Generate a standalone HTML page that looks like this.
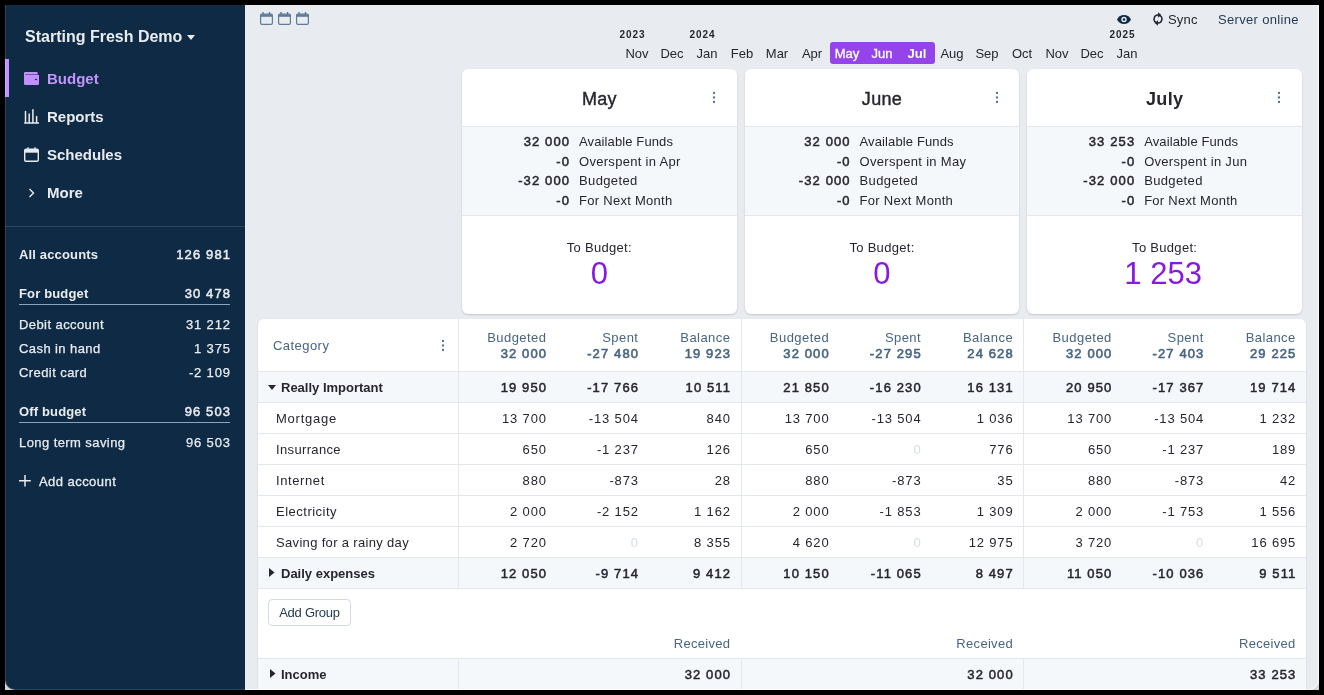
<!DOCTYPE html>
<html><head><meta charset="utf-8"><style>
*{box-sizing:border-box;margin:0;padding:0}
html,body{width:1324px;height:695px;overflow:hidden;background:#000;font-family:"Liberation Sans", sans-serif;color:#272630}
.abs{position:absolute;white-space:nowrap}
#frame{position:absolute;left:5px;top:5px;width:1314px;height:685px;background:#e8ecf0;overflow:hidden;border-radius:0 0 10px 10px}
#side{position:absolute;left:0;top:0;width:240px;height:685px;background:#0f2a44;color:#e8ecf0}
.r{text-align:right}
.c{text-align:center}
.sb{-webkit-text-stroke:0.4px currentColor}
</style></head>
<body><div style="position:absolute;left:0;top:0;width:1324px;height:695px;will-change:transform">
<div class="abs" style="left:5px;top:678px;width:12px;height:12px;background:#d6d6d6"></div><div class="abs" style="left:1307px;top:678px;width:12px;height:12px;background:#d6d6d6"></div><div id="frame"></div><div class="abs" style="left:5px;top:5px;width:240px;height:685px;background:#0f2a44;border-bottom-left-radius:10px"></div>
<div class="abs" style="left:25px;top:28px;font-size:16px;font-weight:bold;color:#e8ecf0;line-height:18px;">Starting Fresh Demo</div>
<div class="abs" style="left:187px;top:35px;line-height:0"><svg width="8" height="5" viewBox="0 0 8 5"><path d="M0 0h8L4 5z" fill="#e8ecf0"/></svg></div>
<div class="abs" style="left:5px;top:59px;width:4px;height:38px;background:#c394fc"></div>
<div class="abs" style="left:47px;top:70px;font-size:15px;font-weight:bold;color:#c394fc;line-height:18px">Budget</div>
<div class="abs" style="left:47px;top:108px;font-size:15px;font-weight:bold;color:#e8ecf0;line-height:18px">Reports</div>
<div class="abs" style="left:47px;top:146px;font-size:15px;font-weight:bold;color:#e8ecf0;line-height:18px">Schedules</div>
<div class="abs" style="left:47px;top:184px;font-size:15px;font-weight:bold;color:#e8ecf0;line-height:18px">More</div>
<div class="abs" style="left:24px;top:72px;line-height:0"><svg width="15" height="13" viewBox="0 0 15 13"><path d="M1.2 0h11.5a1 1 0 0 1 1 1v1.5H1.5v0.6H15v8.7a1.2 1.2 0 0 1-1.2 1.2H1.2A1.2 1.2 0 0 1 0 11.8V1.2A1.2 1.2 0 0 1 1.2 0z" fill="#c190fc"/><ellipse cx="12" cy="7.5" rx="1.1" ry="0.8" fill="#0f2a44"/></svg></div>
<div class="abs" style="left:24px;top:108px;line-height:0"><svg width="15" height="16" viewBox="0 0 15 16" fill="none" stroke="#e8ecf0" stroke-width="1.5" stroke-linecap="round"><path d="M0.8 15h13.6" stroke-width="1.6"/><path d="M1.5 14.5V3.5M5.2 14.5V6M8.9 14.5V1.8M12.6 14.5V8.5"/></svg></div>
<div class="abs" style="left:24px;top:147px;line-height:0"><svg width="15" height="15" viewBox="0 0 15 15" fill="none" stroke="#e8ecf0" stroke-width="1.4"><rect x="0.7" y="2.2" width="13.6" height="12.1" rx="1.4"/><path d="M0.7 4.2h13.6" stroke-width="3"/><path d="M4 0.3v3M11 0.3v3" stroke-width="1.3"/></svg></div>
<div class="abs" style="left:28px;top:188px;line-height:0"><svg width="7" height="10" viewBox="0 0 7 10" fill="none" stroke="#e8ecf0" stroke-width="1.4"><path d="M1.5 1l4 4-4 4"/></svg></div>
<div class="abs" style="left:5px;top:226px;width:240px;height:1px;background:#2c4660"></div>
<div class="abs" style="left:19px;top:246px;font-size:13px;font-weight:bold;color:#e8ecf0;line-height:18px;letter-spacing:0.15px;">All accounts</div>
<div class="abs" style="left:131.12px;top:246px;width:100px;text-align:right;font-size:13px;-webkit-text-stroke:0.5px #e8ecf0;color:#e8ecf0;line-height:18px;letter-spacing:1.12px">126 981</div>
<div class="abs" style="left:19px;top:285px;font-size:13px;font-weight:bold;color:#e8ecf0;line-height:18px;letter-spacing:0.15px;">For budget</div>
<div class="abs" style="left:131.12px;top:285px;width:100px;text-align:right;font-size:13px;-webkit-text-stroke:0.5px #e8ecf0;color:#e8ecf0;line-height:18px;letter-spacing:1.12px">30 478</div>
<div class="abs" style="left:19px;top:304px;width:211px;height:1px;background:#8fa3b8"></div>
<div class="abs" style="left:19px;top:316px;font-size:13px;font-weight:normal;color:#e8ecf0;line-height:18px;letter-spacing:0.42px;-webkit-text-stroke:0.25px #e8ecf0;">Debit account</div>
<div class="abs" style="left:130.85px;top:316px;width:100px;text-align:right;font-size:13px;-webkit-text-stroke:0.25px #e8ecf0;;color:#e8ecf0;line-height:18px;letter-spacing:0.85px">31 212</div>
<div class="abs" style="left:19px;top:340px;font-size:13px;font-weight:normal;color:#e8ecf0;line-height:18px;letter-spacing:0.42px;-webkit-text-stroke:0.25px #e8ecf0;">Cash in hand</div>
<div class="abs" style="left:130.85px;top:340px;width:100px;text-align:right;font-size:13px;-webkit-text-stroke:0.25px #e8ecf0;;color:#e8ecf0;line-height:18px;letter-spacing:0.85px">1 375</div>
<div class="abs" style="left:19px;top:364px;font-size:13px;font-weight:normal;color:#e8ecf0;line-height:18px;letter-spacing:0.42px;-webkit-text-stroke:0.25px #e8ecf0;">Credit card</div>
<div class="abs" style="left:130.85px;top:364px;width:100px;text-align:right;font-size:13px;-webkit-text-stroke:0.25px #e8ecf0;;color:#e8ecf0;line-height:18px;letter-spacing:0.85px">-2 109</div>
<div class="abs" style="left:19px;top:403px;font-size:13px;font-weight:bold;color:#e8ecf0;line-height:18px;letter-spacing:0.15px;">Off budget</div>
<div class="abs" style="left:131.12px;top:403px;width:100px;text-align:right;font-size:13px;-webkit-text-stroke:0.5px #e8ecf0;color:#e8ecf0;line-height:18px;letter-spacing:1.12px">96 503</div>
<div class="abs" style="left:19px;top:422px;width:211px;height:1px;background:#8fa3b8"></div>
<div class="abs" style="left:19px;top:434px;font-size:13px;font-weight:normal;color:#e8ecf0;line-height:18px;letter-spacing:0.42px;-webkit-text-stroke:0.25px #e8ecf0;">Long term saving</div>
<div class="abs" style="left:130.85px;top:434px;width:100px;text-align:right;font-size:13px;-webkit-text-stroke:0.25px #e8ecf0;;color:#e8ecf0;line-height:18px;letter-spacing:0.85px">96 503</div>
<div class="abs" style="left:19px;top:475px;line-height:0"><svg width="12" height="12" viewBox="0 0 12 12" stroke="#e8ecf0" stroke-width="1.5"><path d="M6 0v11.5M0 5.8h11.8"/></svg></div>
<div class="abs" style="left:39px;top:473px;font-size:13px;color:#e8ecf0;line-height:18px;letter-spacing:0.45px;-webkit-text-stroke:0.3px #e8ecf0">Add account</div>
<div class="abs" style="left:260px;top:11px;line-height:0"><svg width="13" height="14" viewBox="0 0 13 14" fill="none" stroke="#5f7b98" stroke-width="1.2"><rect x="0.6" y="3.1" width="11.8" height="10.2" rx="1.3"/><path d="M0.6 4.6h11.8" stroke-width="2.4"/><path d="M3 1v3M9.5 1v3" stroke-width="1.4"/></svg></div>
<div class="abs" style="left:278px;top:11px;line-height:0"><svg width="13" height="14" viewBox="0 0 13 14" fill="none" stroke="#5f7b98" stroke-width="1.2"><rect x="0.6" y="3.1" width="11.8" height="10.2" rx="1.3"/><path d="M0.6 4.6h11.8" stroke-width="2.4"/><path d="M3 1v3M9.5 1v3" stroke-width="1.4"/></svg></div>
<div class="abs" style="left:296px;top:11px;line-height:0"><svg width="13" height="14" viewBox="0 0 13 14" fill="none" stroke="#5f7b98" stroke-width="1.2"><rect x="0.6" y="3.1" width="11.8" height="10.2" rx="1.3"/><path d="M0.6 4.6h11.8" stroke-width="2.4"/><path d="M3 1v3M9.5 1v3" stroke-width="1.4"/></svg></div>
<div class="abs" style="left:830px;top:42px;width:105px;height:22px;background:#9444ea;border-radius:3px"></div>
<div class="abs" style="left:619.5px;top:45px;width:35px;text-align:center;font-size:13px;color:#272630;font-weight:normal;line-height:18px;">Nov</div>
<div class="abs" style="left:654.5px;top:45px;width:35px;text-align:center;font-size:13px;color:#272630;font-weight:normal;line-height:18px;">Dec</div>
<div class="abs" style="left:689.5px;top:45px;width:35px;text-align:center;font-size:13px;color:#272630;font-weight:normal;line-height:18px;">Jan</div>
<div class="abs" style="left:724.5px;top:45px;width:35px;text-align:center;font-size:13px;color:#272630;font-weight:normal;line-height:18px;">Feb</div>
<div class="abs" style="left:759.5px;top:45px;width:35px;text-align:center;font-size:13px;color:#272630;font-weight:normal;line-height:18px;">Mar</div>
<div class="abs" style="left:794.5px;top:45px;width:35px;text-align:center;font-size:13px;color:#272630;font-weight:normal;line-height:18px;">Apr</div>
<div class="abs" style="left:829.5px;top:45px;width:35px;text-align:center;font-size:13px;color:#fff;font-weight:normal;line-height:18px;-webkit-text-stroke:0.3px #fff;">May</div>
<div class="abs" style="left:864.5px;top:45px;width:35px;text-align:center;font-size:13px;color:#fff;font-weight:normal;line-height:18px;-webkit-text-stroke:0.3px #fff;">Jun</div>
<div class="abs" style="left:899.5px;top:45px;width:35px;text-align:center;font-size:13px;color:#fff;font-weight:bold;line-height:18px;">Jul</div>
<div class="abs" style="left:934.5px;top:45px;width:35px;text-align:center;font-size:13px;color:#272630;font-weight:normal;line-height:18px;">Aug</div>
<div class="abs" style="left:969.5px;top:45px;width:35px;text-align:center;font-size:13px;color:#272630;font-weight:normal;line-height:18px;">Sep</div>
<div class="abs" style="left:1004.5px;top:45px;width:35px;text-align:center;font-size:13px;color:#272630;font-weight:normal;line-height:18px;">Oct</div>
<div class="abs" style="left:1039.5px;top:45px;width:35px;text-align:center;font-size:13px;color:#272630;font-weight:normal;line-height:18px;">Nov</div>
<div class="abs" style="left:1074.5px;top:45px;width:35px;text-align:center;font-size:13px;color:#272630;font-weight:normal;line-height:18px;">Dec</div>
<div class="abs" style="left:1109.5px;top:45px;width:35px;text-align:center;font-size:13px;color:#272630;font-weight:normal;line-height:18px;">Jan</div>
<div class="abs" style="left:619.5px;top:29px;font-size:10px;font-weight:bold;line-height:11px;color:#272630;letter-spacing:0.9px">2023</div>
<div class="abs" style="left:689.5px;top:29px;font-size:10px;font-weight:bold;line-height:11px;color:#272630;letter-spacing:0.9px">2024</div>
<div class="abs" style="left:1109.5px;top:29px;font-size:10px;font-weight:bold;line-height:11px;color:#272630;letter-spacing:0.9px">2025</div>
<div class="abs" style="left:1116.5px;top:15px;line-height:0"><svg width="14" height="9" viewBox="0 0 14 9"><path d="M7 0C3.8 0 1.1 1.9 0 4.5 1.1 7.1 3.8 9 7 9s5.9-1.9 7-4.5C12.9 1.9 10.2 0 7 0z" fill="#102a43"/><circle cx="7" cy="4.5" r="2.7" fill="#e8ecf0"/><circle cx="7" cy="4.5" r="1.3" fill="#102a43"/></svg></div>
<div class="abs" style="left:1153px;top:12px;line-height:0"><svg width="10" height="14" viewBox="0 0 10 14"><g fill="none" stroke="#272630" stroke-width="1.5"><path d="M5.6 3.1A4 4 0 0 0 3.2 10.6"/><path d="M4.4 10.9A4 4 0 0 0 6.8 3.4"/></g><path d="M5 0.3L8.3 3 5 5.7z" fill="#272630"/><path d="M5 8.3L1.7 11 5 13.7z" fill="#272630"/></svg></div>
<div class="abs" style="left:1168px;top:11px;font-size:13px;line-height:18px;color:#272630;letter-spacing:0.2px">Sync</div>
<div class="abs" style="left:1218px;top:11px;font-size:13px;line-height:18px;color:#243b53;letter-spacing:0.33px">Server online</div>
<div class="abs" style="left:462px;top:69px;width:274.67px;height:245px;background:#fff;border-radius:6px;box-shadow:0 1px 2px rgba(0,0,0,0.16);overflow:hidden"><div class="abs" style="left:0;top:57px;width:274.67px;height:90px;background:#f5f8fb;border-top:1px solid #e3e8ee;border-bottom:1px solid #e3e8ee"></div></div>
<div class="abs" style="left:462px;top:88px;width:274.67px;text-align:center;font-size:18px;font-weight:normal;line-height:22px;color:#272630;letter-spacing:0.3px;-webkit-text-stroke:0.4px">May</div>
<div class="abs" style="left:712px;top:91px;line-height:0"><svg width="4" height="13" viewBox="0 0 4 13" fill="#4f6f91"><circle cx="2" cy="2" r="1.15"/><circle cx="2" cy="6.5" r="1.15"/><circle cx="2" cy="11" r="1.15"/></svg></div>
<div class="abs" style="left:469.12px;top:133.0px;width:101px;text-align:right;font-size:13px;-webkit-text-stroke:0.5px #272630;line-height:18px;color:#272630;letter-spacing:1.12px">32 000</div>
<div class="abs" style="left:579px;top:133.0px;font-size:13px;line-height:18px;color:#272630;letter-spacing:0.12px">Available Funds</div>
<div class="abs" style="left:469.12px;top:152.5px;width:101px;text-align:right;font-size:13px;-webkit-text-stroke:0.5px #272630;line-height:18px;color:#272630;letter-spacing:1.12px">-0</div>
<div class="abs" style="left:579px;top:152.5px;font-size:13px;line-height:18px;color:#272630;letter-spacing:0.3px">Overspent in Apr</div>
<div class="abs" style="left:469.12px;top:172.0px;width:101px;text-align:right;font-size:13px;-webkit-text-stroke:0.5px #272630;line-height:18px;color:#272630;letter-spacing:1.12px">-32 000</div>
<div class="abs" style="left:579px;top:172.0px;font-size:13px;line-height:18px;color:#272630;letter-spacing:0.37px">Budgeted</div>
<div class="abs" style="left:469.12px;top:191.5px;width:101px;text-align:right;font-size:13px;-webkit-text-stroke:0.5px #272630;line-height:18px;color:#272630;letter-spacing:1.12px">-0</div>
<div class="abs" style="left:579px;top:191.5px;font-size:13px;line-height:18px;color:#272630;letter-spacing:0.28px">For Next Month</div>
<div class="abs" style="left:462px;top:239px;width:274.67px;text-align:center;font-size:13px;line-height:18px;color:#272630;letter-spacing:0.3px">To Budget:</div>
<div class="abs" style="left:462px;top:257px;width:274.67px;text-align:center;font-size:31px;line-height:34px;color:#8719e0">0</div>
<div class="abs" style="left:744.67px;top:69px;width:274.67px;height:245px;background:#fff;border-radius:6px;box-shadow:0 1px 2px rgba(0,0,0,0.16);overflow:hidden"><div class="abs" style="left:0;top:57px;width:274.67px;height:90px;background:#f5f8fb;border-top:1px solid #e3e8ee;border-bottom:1px solid #e3e8ee"></div></div>
<div class="abs" style="left:744.67px;top:88px;width:274.67px;text-align:center;font-size:18px;font-weight:normal;line-height:22px;color:#272630;letter-spacing:0.3px;-webkit-text-stroke:0.4px">June</div>
<div class="abs" style="left:994.67px;top:91px;line-height:0"><svg width="4" height="13" viewBox="0 0 4 13" fill="#4f6f91"><circle cx="2" cy="2" r="1.15"/><circle cx="2" cy="6.5" r="1.15"/><circle cx="2" cy="11" r="1.15"/></svg></div>
<div class="abs" style="left:749.6899999999999px;top:133.0px;width:101px;text-align:right;font-size:13px;-webkit-text-stroke:0.5px #272630;line-height:18px;color:#272630;letter-spacing:1.12px">32 000</div>
<div class="abs" style="left:859.5699999999999px;top:133.0px;font-size:13px;line-height:18px;color:#272630;letter-spacing:0.12px">Available Funds</div>
<div class="abs" style="left:749.6899999999999px;top:152.5px;width:101px;text-align:right;font-size:13px;-webkit-text-stroke:0.5px #272630;line-height:18px;color:#272630;letter-spacing:1.12px">-0</div>
<div class="abs" style="left:859.5699999999999px;top:152.5px;font-size:13px;line-height:18px;color:#272630;letter-spacing:0.3px">Overspent in May</div>
<div class="abs" style="left:749.6899999999999px;top:172.0px;width:101px;text-align:right;font-size:13px;-webkit-text-stroke:0.5px #272630;line-height:18px;color:#272630;letter-spacing:1.12px">-32 000</div>
<div class="abs" style="left:859.5699999999999px;top:172.0px;font-size:13px;line-height:18px;color:#272630;letter-spacing:0.37px">Budgeted</div>
<div class="abs" style="left:749.6899999999999px;top:191.5px;width:101px;text-align:right;font-size:13px;-webkit-text-stroke:0.5px #272630;line-height:18px;color:#272630;letter-spacing:1.12px">-0</div>
<div class="abs" style="left:859.5699999999999px;top:191.5px;font-size:13px;line-height:18px;color:#272630;letter-spacing:0.28px">For Next Month</div>
<div class="abs" style="left:744.67px;top:239px;width:274.67px;text-align:center;font-size:13px;line-height:18px;color:#272630;letter-spacing:0.3px">To Budget:</div>
<div class="abs" style="left:744.67px;top:257px;width:274.67px;text-align:center;font-size:31px;line-height:34px;color:#8719e0">0</div>
<div class="abs" style="left:1027.33px;top:69px;width:274.67px;height:245px;background:#fff;border-radius:6px;box-shadow:0 1px 2px rgba(0,0,0,0.16);overflow:hidden"><div class="abs" style="left:0;top:57px;width:274.67px;height:90px;background:#f5f8fb;border-top:1px solid #e3e8ee;border-bottom:1px solid #e3e8ee"></div></div>
<div class="abs" style="left:1027.33px;top:88px;width:274.67px;text-align:center;font-size:18px;font-weight:bold;line-height:22px;color:#272630;letter-spacing:0.3px;-webkit-text-stroke:0">July</div>
<div class="abs" style="left:1277.33px;top:91px;line-height:0"><svg width="4" height="13" viewBox="0 0 4 13" fill="#4f6f91"><circle cx="2" cy="2" r="1.15"/><circle cx="2" cy="6.5" r="1.15"/><circle cx="2" cy="11" r="1.15"/></svg></div>
<div class="abs" style="left:1034.2499999999998px;top:133.0px;width:101px;text-align:right;font-size:13px;-webkit-text-stroke:0.5px #272630;line-height:18px;color:#272630;letter-spacing:1.12px">33 253</div>
<div class="abs" style="left:1144.1299999999999px;top:133.0px;font-size:13px;line-height:18px;color:#272630;letter-spacing:0.12px">Available Funds</div>
<div class="abs" style="left:1034.2499999999998px;top:152.5px;width:101px;text-align:right;font-size:13px;-webkit-text-stroke:0.5px #272630;line-height:18px;color:#272630;letter-spacing:1.12px">-0</div>
<div class="abs" style="left:1144.1299999999999px;top:152.5px;font-size:13px;line-height:18px;color:#272630;letter-spacing:0.3px">Overspent in Jun</div>
<div class="abs" style="left:1034.2499999999998px;top:172.0px;width:101px;text-align:right;font-size:13px;-webkit-text-stroke:0.5px #272630;line-height:18px;color:#272630;letter-spacing:1.12px">-32 000</div>
<div class="abs" style="left:1144.1299999999999px;top:172.0px;font-size:13px;line-height:18px;color:#272630;letter-spacing:0.37px">Budgeted</div>
<div class="abs" style="left:1034.2499999999998px;top:191.5px;width:101px;text-align:right;font-size:13px;-webkit-text-stroke:0.5px #272630;line-height:18px;color:#272630;letter-spacing:1.12px">-0</div>
<div class="abs" style="left:1144.1299999999999px;top:191.5px;font-size:13px;line-height:18px;color:#272630;letter-spacing:0.28px">For Next Month</div>
<div class="abs" style="left:1027.33px;top:239px;width:274.67px;text-align:center;font-size:13px;line-height:18px;color:#272630;letter-spacing:0.3px">To Budget:</div>
<div class="abs" style="left:1025.83px;top:257px;width:274.67px;text-align:center;font-size:31px;line-height:34px;color:#8719e0">1 253</div>
<div class="abs" style="left:258px;top:319px;width:1048px;height:380px;background:#fff;border-radius:6px 6px 0 0;box-shadow:0 1px 2px rgba(0,0,0,0.14)"></div>
<div class="abs" style="left:458px;top:319px;width:1px;height:270px;background:#e3e8ee"></div>
<div class="abs" style="left:458px;top:658px;width:1px;height:40px;background:#e3e8ee"></div>
<div class="abs" style="left:740.67px;top:319px;width:1px;height:270px;background:#e3e8ee"></div>
<div class="abs" style="left:740.67px;top:658px;width:1px;height:40px;background:#e3e8ee"></div>
<div class="abs" style="left:1023.33px;top:319px;width:1px;height:270px;background:#e3e8ee"></div>
<div class="abs" style="left:1023.33px;top:658px;width:1px;height:40px;background:#e3e8ee"></div>
<div class="abs" style="left:273px;top:337px;font-size:13px;line-height:18px;color:#486581;letter-spacing:0.45px">Category</div>
<div class="abs" style="left:440.7px;top:339px;line-height:0"><svg width="4" height="13" viewBox="0 0 4 13" fill="#4f6f91"><circle cx="2" cy="2" r="1.15"/><circle cx="2" cy="6.5" r="1.15"/><circle cx="2" cy="11" r="1.15"/></svg></div>
<div class="abs" style="left:446.45px;top:329px;width:100px;text-align:right;font-size:13px;line-height:18px;color:#486581;letter-spacing:0.45px">Budgeted</div>
<div class="abs" style="left:447.12px;top:345px;width:100px;text-align:right;font-size:13px;-webkit-text-stroke:0.6px #486581;line-height:18px;color:#486581;letter-spacing:1.12px">32 000</div>
<div class="abs" style="left:538.45px;top:329px;width:100px;text-align:right;font-size:13px;line-height:18px;color:#486581;letter-spacing:0.45px">Spent</div>
<div class="abs" style="left:539.12px;top:345px;width:100px;text-align:right;font-size:13px;-webkit-text-stroke:0.6px #486581;line-height:18px;color:#486581;letter-spacing:1.12px">-27 480</div>
<div class="abs" style="left:630.45px;top:329px;width:100px;text-align:right;font-size:13px;line-height:18px;color:#486581;letter-spacing:0.45px">Balance</div>
<div class="abs" style="left:631.12px;top:345px;width:100px;text-align:right;font-size:13px;-webkit-text-stroke:0.6px #486581;line-height:18px;color:#486581;letter-spacing:1.12px">19 923</div>
<div class="abs" style="left:729.12px;top:329px;width:100px;text-align:right;font-size:13px;line-height:18px;color:#486581;letter-spacing:0.45px">Budgeted</div>
<div class="abs" style="left:729.79px;top:345px;width:100px;text-align:right;font-size:13px;-webkit-text-stroke:0.6px #486581;line-height:18px;color:#486581;letter-spacing:1.12px">32 000</div>
<div class="abs" style="left:821.12px;top:329px;width:100px;text-align:right;font-size:13px;line-height:18px;color:#486581;letter-spacing:0.45px">Spent</div>
<div class="abs" style="left:821.79px;top:345px;width:100px;text-align:right;font-size:13px;-webkit-text-stroke:0.6px #486581;line-height:18px;color:#486581;letter-spacing:1.12px">-27 295</div>
<div class="abs" style="left:913.12px;top:329px;width:100px;text-align:right;font-size:13px;line-height:18px;color:#486581;letter-spacing:0.45px">Balance</div>
<div class="abs" style="left:913.79px;top:345px;width:100px;text-align:right;font-size:13px;-webkit-text-stroke:0.6px #486581;line-height:18px;color:#486581;letter-spacing:1.12px">24 628</div>
<div class="abs" style="left:1011.78px;top:329px;width:100px;text-align:right;font-size:13px;line-height:18px;color:#486581;letter-spacing:0.45px">Budgeted</div>
<div class="abs" style="left:1012.4499999999999px;top:345px;width:100px;text-align:right;font-size:13px;-webkit-text-stroke:0.6px #486581;line-height:18px;color:#486581;letter-spacing:1.12px">32 000</div>
<div class="abs" style="left:1103.78px;top:329px;width:100px;text-align:right;font-size:13px;line-height:18px;color:#486581;letter-spacing:0.45px">Spent</div>
<div class="abs" style="left:1104.4499999999998px;top:345px;width:100px;text-align:right;font-size:13px;-webkit-text-stroke:0.6px #486581;line-height:18px;color:#486581;letter-spacing:1.12px">-27 403</div>
<div class="abs" style="left:1195.78px;top:329px;width:100px;text-align:right;font-size:13px;line-height:18px;color:#486581;letter-spacing:0.45px">Balance</div>
<div class="abs" style="left:1196.4499999999998px;top:345px;width:100px;text-align:right;font-size:13px;-webkit-text-stroke:0.6px #486581;line-height:18px;color:#486581;letter-spacing:1.12px">29 225</div>
<div class="abs" style="left:258px;top:371px;width:1048px;height:32px;background:#f5f8fb;border-top:1px solid #e3e8ee;border-bottom:1px solid #e3e8ee"></div>
<div class="abs" style="left:268px;top:385px;line-height:0"><svg width="8" height="5" viewBox="0 0 8 5"><path d="M0 0h8L4 5z" fill="#272630"/></svg></div>
<div class="abs" style="left:281px;top:379px;font-size:13px;font-weight:bold;line-height:18px;color:#272630">Really Important</div>
<div class="abs" style="left:447.12px;top:379px;width:100px;text-align:right;font-size:13px;-webkit-text-stroke:0.5px #272630;line-height:18px;color:#272630;letter-spacing:1.12px">19 950</div>
<div class="abs" style="left:539.12px;top:379px;width:100px;text-align:right;font-size:13px;-webkit-text-stroke:0.5px #272630;line-height:18px;color:#272630;letter-spacing:1.12px">-17 766</div>
<div class="abs" style="left:631.12px;top:379px;width:100px;text-align:right;font-size:13px;-webkit-text-stroke:0.5px #272630;line-height:18px;color:#272630;letter-spacing:1.12px">10 511</div>
<div class="abs" style="left:729.79px;top:379px;width:100px;text-align:right;font-size:13px;-webkit-text-stroke:0.5px #272630;line-height:18px;color:#272630;letter-spacing:1.12px">21 850</div>
<div class="abs" style="left:821.79px;top:379px;width:100px;text-align:right;font-size:13px;-webkit-text-stroke:0.5px #272630;line-height:18px;color:#272630;letter-spacing:1.12px">-16 230</div>
<div class="abs" style="left:913.79px;top:379px;width:100px;text-align:right;font-size:13px;-webkit-text-stroke:0.5px #272630;line-height:18px;color:#272630;letter-spacing:1.12px">16 131</div>
<div class="abs" style="left:1012.4499999999999px;top:379px;width:100px;text-align:right;font-size:13px;-webkit-text-stroke:0.5px #272630;line-height:18px;color:#272630;letter-spacing:1.12px">20 950</div>
<div class="abs" style="left:1104.4499999999998px;top:379px;width:100px;text-align:right;font-size:13px;-webkit-text-stroke:0.5px #272630;line-height:18px;color:#272630;letter-spacing:1.12px">-17 367</div>
<div class="abs" style="left:1196.4499999999998px;top:379px;width:100px;text-align:right;font-size:13px;-webkit-text-stroke:0.5px #272630;line-height:18px;color:#272630;letter-spacing:1.12px">19 714</div>
<div class="abs" style="left:258px;top:433px;width:1048px;height:1px;background:#e3e8ee"></div>
<div class="abs" style="left:276px;top:410px;font-size:13px;line-height:18px;color:#272630;letter-spacing:0.75px">Mortgage</div>
<div class="abs" style="left:446.85px;top:410px;width:100px;text-align:right;font-size:13px;font-weight:normal;line-height:18px;color:#272630;letter-spacing:0.85px">13 700</div>
<div class="abs" style="left:538.85px;top:410px;width:100px;text-align:right;font-size:13px;font-weight:normal;line-height:18px;color:#272630;letter-spacing:0.85px">-13 504</div>
<div class="abs" style="left:630.85px;top:410px;width:100px;text-align:right;font-size:13px;font-weight:normal;line-height:18px;color:#272630;letter-spacing:0.85px">840</div>
<div class="abs" style="left:729.52px;top:410px;width:100px;text-align:right;font-size:13px;font-weight:normal;line-height:18px;color:#272630;letter-spacing:0.85px">13 700</div>
<div class="abs" style="left:821.52px;top:410px;width:100px;text-align:right;font-size:13px;font-weight:normal;line-height:18px;color:#272630;letter-spacing:0.85px">-13 504</div>
<div class="abs" style="left:913.52px;top:410px;width:100px;text-align:right;font-size:13px;font-weight:normal;line-height:18px;color:#272630;letter-spacing:0.85px">1 036</div>
<div class="abs" style="left:1012.18px;top:410px;width:100px;text-align:right;font-size:13px;font-weight:normal;line-height:18px;color:#272630;letter-spacing:0.85px">13 700</div>
<div class="abs" style="left:1104.1799999999998px;top:410px;width:100px;text-align:right;font-size:13px;font-weight:normal;line-height:18px;color:#272630;letter-spacing:0.85px">-13 504</div>
<div class="abs" style="left:1196.1799999999998px;top:410px;width:100px;text-align:right;font-size:13px;font-weight:normal;line-height:18px;color:#272630;letter-spacing:0.85px">1 232</div>
<div class="abs" style="left:258px;top:464px;width:1048px;height:1px;background:#e3e8ee"></div>
<div class="abs" style="left:276px;top:441px;font-size:13px;line-height:18px;color:#272630;letter-spacing:0.35px">Insurrance</div>
<div class="abs" style="left:446.85px;top:441px;width:100px;text-align:right;font-size:13px;font-weight:normal;line-height:18px;color:#272630;letter-spacing:0.85px">650</div>
<div class="abs" style="left:538.85px;top:441px;width:100px;text-align:right;font-size:13px;font-weight:normal;line-height:18px;color:#272630;letter-spacing:0.85px">-1 237</div>
<div class="abs" style="left:630.85px;top:441px;width:100px;text-align:right;font-size:13px;font-weight:normal;line-height:18px;color:#272630;letter-spacing:0.85px">126</div>
<div class="abs" style="left:729.52px;top:441px;width:100px;text-align:right;font-size:13px;font-weight:normal;line-height:18px;color:#272630;letter-spacing:0.85px">650</div>
<div class="abs" style="left:821.52px;top:441px;width:100px;text-align:right;font-size:13px;font-weight:normal;line-height:18px;color:#d5dde5;letter-spacing:0.85px">0</div>
<div class="abs" style="left:913.52px;top:441px;width:100px;text-align:right;font-size:13px;font-weight:normal;line-height:18px;color:#272630;letter-spacing:0.85px">776</div>
<div class="abs" style="left:1012.18px;top:441px;width:100px;text-align:right;font-size:13px;font-weight:normal;line-height:18px;color:#272630;letter-spacing:0.85px">650</div>
<div class="abs" style="left:1104.1799999999998px;top:441px;width:100px;text-align:right;font-size:13px;font-weight:normal;line-height:18px;color:#272630;letter-spacing:0.85px">-1 237</div>
<div class="abs" style="left:1196.1799999999998px;top:441px;width:100px;text-align:right;font-size:13px;font-weight:normal;line-height:18px;color:#272630;letter-spacing:0.85px">189</div>
<div class="abs" style="left:258px;top:495px;width:1048px;height:1px;background:#e3e8ee"></div>
<div class="abs" style="left:276px;top:472px;font-size:13px;line-height:18px;color:#272630;letter-spacing:0.6px">Internet</div>
<div class="abs" style="left:446.85px;top:472px;width:100px;text-align:right;font-size:13px;font-weight:normal;line-height:18px;color:#272630;letter-spacing:0.85px">880</div>
<div class="abs" style="left:538.85px;top:472px;width:100px;text-align:right;font-size:13px;font-weight:normal;line-height:18px;color:#272630;letter-spacing:0.85px">-873</div>
<div class="abs" style="left:630.85px;top:472px;width:100px;text-align:right;font-size:13px;font-weight:normal;line-height:18px;color:#272630;letter-spacing:0.85px">28</div>
<div class="abs" style="left:729.52px;top:472px;width:100px;text-align:right;font-size:13px;font-weight:normal;line-height:18px;color:#272630;letter-spacing:0.85px">880</div>
<div class="abs" style="left:821.52px;top:472px;width:100px;text-align:right;font-size:13px;font-weight:normal;line-height:18px;color:#272630;letter-spacing:0.85px">-873</div>
<div class="abs" style="left:913.52px;top:472px;width:100px;text-align:right;font-size:13px;font-weight:normal;line-height:18px;color:#272630;letter-spacing:0.85px">35</div>
<div class="abs" style="left:1012.18px;top:472px;width:100px;text-align:right;font-size:13px;font-weight:normal;line-height:18px;color:#272630;letter-spacing:0.85px">880</div>
<div class="abs" style="left:1104.1799999999998px;top:472px;width:100px;text-align:right;font-size:13px;font-weight:normal;line-height:18px;color:#272630;letter-spacing:0.85px">-873</div>
<div class="abs" style="left:1196.1799999999998px;top:472px;width:100px;text-align:right;font-size:13px;font-weight:normal;line-height:18px;color:#272630;letter-spacing:0.85px">42</div>
<div class="abs" style="left:258px;top:526px;width:1048px;height:1px;background:#e3e8ee"></div>
<div class="abs" style="left:276px;top:503px;font-size:13px;line-height:18px;color:#272630;letter-spacing:0.5px">Electricity</div>
<div class="abs" style="left:446.85px;top:503px;width:100px;text-align:right;font-size:13px;font-weight:normal;line-height:18px;color:#272630;letter-spacing:0.85px">2 000</div>
<div class="abs" style="left:538.85px;top:503px;width:100px;text-align:right;font-size:13px;font-weight:normal;line-height:18px;color:#272630;letter-spacing:0.85px">-2 152</div>
<div class="abs" style="left:630.85px;top:503px;width:100px;text-align:right;font-size:13px;font-weight:normal;line-height:18px;color:#272630;letter-spacing:0.85px">1 162</div>
<div class="abs" style="left:729.52px;top:503px;width:100px;text-align:right;font-size:13px;font-weight:normal;line-height:18px;color:#272630;letter-spacing:0.85px">2 000</div>
<div class="abs" style="left:821.52px;top:503px;width:100px;text-align:right;font-size:13px;font-weight:normal;line-height:18px;color:#272630;letter-spacing:0.85px">-1 853</div>
<div class="abs" style="left:913.52px;top:503px;width:100px;text-align:right;font-size:13px;font-weight:normal;line-height:18px;color:#272630;letter-spacing:0.85px">1 309</div>
<div class="abs" style="left:1012.18px;top:503px;width:100px;text-align:right;font-size:13px;font-weight:normal;line-height:18px;color:#272630;letter-spacing:0.85px">2 000</div>
<div class="abs" style="left:1104.1799999999998px;top:503px;width:100px;text-align:right;font-size:13px;font-weight:normal;line-height:18px;color:#272630;letter-spacing:0.85px">-1 753</div>
<div class="abs" style="left:1196.1799999999998px;top:503px;width:100px;text-align:right;font-size:13px;font-weight:normal;line-height:18px;color:#272630;letter-spacing:0.85px">1 556</div>
<div class="abs" style="left:258px;top:557px;width:1048px;height:1px;background:#e3e8ee"></div>
<div class="abs" style="left:276px;top:534px;font-size:13px;line-height:18px;color:#272630;letter-spacing:0.33px">Saving for a rainy day</div>
<div class="abs" style="left:446.85px;top:534px;width:100px;text-align:right;font-size:13px;font-weight:normal;line-height:18px;color:#272630;letter-spacing:0.85px">2 720</div>
<div class="abs" style="left:538.85px;top:534px;width:100px;text-align:right;font-size:13px;font-weight:normal;line-height:18px;color:#d5dde5;letter-spacing:0.85px">0</div>
<div class="abs" style="left:630.85px;top:534px;width:100px;text-align:right;font-size:13px;font-weight:normal;line-height:18px;color:#272630;letter-spacing:0.85px">8 355</div>
<div class="abs" style="left:729.52px;top:534px;width:100px;text-align:right;font-size:13px;font-weight:normal;line-height:18px;color:#272630;letter-spacing:0.85px">4 620</div>
<div class="abs" style="left:821.52px;top:534px;width:100px;text-align:right;font-size:13px;font-weight:normal;line-height:18px;color:#d5dde5;letter-spacing:0.85px">0</div>
<div class="abs" style="left:913.52px;top:534px;width:100px;text-align:right;font-size:13px;font-weight:normal;line-height:18px;color:#272630;letter-spacing:0.85px">12 975</div>
<div class="abs" style="left:1012.18px;top:534px;width:100px;text-align:right;font-size:13px;font-weight:normal;line-height:18px;color:#272630;letter-spacing:0.85px">3 720</div>
<div class="abs" style="left:1104.1799999999998px;top:534px;width:100px;text-align:right;font-size:13px;font-weight:normal;line-height:18px;color:#d5dde5;letter-spacing:0.85px">0</div>
<div class="abs" style="left:1196.1799999999998px;top:534px;width:100px;text-align:right;font-size:13px;font-weight:normal;line-height:18px;color:#272630;letter-spacing:0.85px">16 695</div>
<div class="abs" style="left:258px;top:557px;width:1048px;height:32px;background:#f5f8fb;border-top:1px solid #e3e8ee;border-bottom:1px solid #e3e8ee"></div>
<div class="abs" style="left:269px;top:568px;line-height:0"><svg width="6" height="9" viewBox="0 0 6 9"><path d="M0 0v9L5.5 4.5z" fill="#272630"/></svg></div>
<div class="abs" style="left:281px;top:565px;font-size:13px;font-weight:bold;line-height:18px;color:#272630">Daily expenses</div>
<div class="abs" style="left:447.12px;top:565px;width:100px;text-align:right;font-size:13px;-webkit-text-stroke:0.5px #272630;line-height:18px;color:#272630;letter-spacing:1.12px">12 050</div>
<div class="abs" style="left:539.12px;top:565px;width:100px;text-align:right;font-size:13px;-webkit-text-stroke:0.5px #272630;line-height:18px;color:#272630;letter-spacing:1.12px">-9 714</div>
<div class="abs" style="left:631.12px;top:565px;width:100px;text-align:right;font-size:13px;-webkit-text-stroke:0.5px #272630;line-height:18px;color:#272630;letter-spacing:1.12px">9 412</div>
<div class="abs" style="left:729.79px;top:565px;width:100px;text-align:right;font-size:13px;-webkit-text-stroke:0.5px #272630;line-height:18px;color:#272630;letter-spacing:1.12px">10 150</div>
<div class="abs" style="left:821.79px;top:565px;width:100px;text-align:right;font-size:13px;-webkit-text-stroke:0.5px #272630;line-height:18px;color:#272630;letter-spacing:1.12px">-11 065</div>
<div class="abs" style="left:913.79px;top:565px;width:100px;text-align:right;font-size:13px;-webkit-text-stroke:0.5px #272630;line-height:18px;color:#272630;letter-spacing:1.12px">8 497</div>
<div class="abs" style="left:1012.4499999999999px;top:565px;width:100px;text-align:right;font-size:13px;-webkit-text-stroke:0.5px #272630;line-height:18px;color:#272630;letter-spacing:1.12px">11 050</div>
<div class="abs" style="left:1104.4499999999998px;top:565px;width:100px;text-align:right;font-size:13px;-webkit-text-stroke:0.5px #272630;line-height:18px;color:#272630;letter-spacing:1.12px">-10 036</div>
<div class="abs" style="left:1196.4499999999998px;top:565px;width:100px;text-align:right;font-size:13px;-webkit-text-stroke:0.5px #272630;line-height:18px;color:#272630;letter-spacing:1.12px">9 511</div>
<div class="abs" style="left:458px;top:319px;width:1px;height:270px;background:#e3e8ee"></div>
<div class="abs" style="left:740.67px;top:319px;width:1px;height:270px;background:#e3e8ee"></div>
<div class="abs" style="left:1023.33px;top:319px;width:1px;height:270px;background:#e3e8ee"></div>
<div class="abs" style="left:268px;top:599px;width:83px;height:27px;border:1px solid #d3dbe4;border-radius:4px;background:#fff"></div>
<div class="abs" style="left:268px;top:604px;width:83px;text-align:center;font-size:13px;line-height:18px;color:#243b53;letter-spacing:-0.25px">Add Group</div>
<div class="abs" style="left:630.3px;top:635px;width:100px;text-align:right;font-size:13px;line-height:18px;color:#486581;letter-spacing:0.3px">Received</div>
<div class="abs" style="left:912.9699999999999px;top:635px;width:100px;text-align:right;font-size:13px;line-height:18px;color:#486581;letter-spacing:0.3px">Received</div>
<div class="abs" style="left:1195.6299999999999px;top:635px;width:100px;text-align:right;font-size:13px;line-height:18px;color:#486581;letter-spacing:0.3px">Received</div>
<div class="abs" style="left:258px;top:658px;width:1048px;height:40px;background:#f5f8fb;border-top:1px solid #e3e8ee"></div>
<div class="abs" style="left:458px;top:658px;width:1px;height:40px;background:#e3e8ee"></div>
<div class="abs" style="left:740.67px;top:658px;width:1px;height:40px;background:#e3e8ee"></div>
<div class="abs" style="left:1023.33px;top:658px;width:1px;height:40px;background:#e3e8ee"></div>
<div class="abs" style="left:270px;top:669px;line-height:0"><svg width="6" height="9" viewBox="0 0 6 9"><path d="M0 0v9L5.5 4.5z" fill="#272630"/></svg></div>
<div class="abs" style="left:281px;top:666px;font-size:13px;font-weight:bold;line-height:18px;color:#272630">Income</div>
<div class="abs" style="left:631.12px;top:666px;width:100px;text-align:right;font-size:13px;-webkit-text-stroke:0.5px #272630;line-height:18px;color:#272630;letter-spacing:1.12px">32 000</div>
<div class="abs" style="left:913.79px;top:666px;width:100px;text-align:right;font-size:13px;-webkit-text-stroke:0.5px #272630;line-height:18px;color:#272630;letter-spacing:1.12px">32 000</div>
<div class="abs" style="left:1196.4499999999998px;top:666px;width:100px;text-align:right;font-size:13px;-webkit-text-stroke:0.5px #272630;line-height:18px;color:#272630;letter-spacing:1.12px">33 253</div>
<div class="abs" style="left:0;top:690px;width:1324px;height:5px;background:#000"></div><div class="abs" style="left:1319px;top:0;width:5px;height:695px;background:#000"></div><div class="abs" style="left:5px;top:5px;width:1314px;height:685px;border:1px solid rgba(255,255,255,0.12);border-top:none;border-radius:0 0 10px 10px;clip-path:inset(0 1074px 0 0)"></div><div class="abs" style="left:5px;top:5px;width:1314px;height:685px;border:1px solid rgba(255,255,255,0.75);border-top:none;border-radius:0 0 10px 10px;clip-path:inset(0 0 0 240px)"></div>
</div></body></html>
